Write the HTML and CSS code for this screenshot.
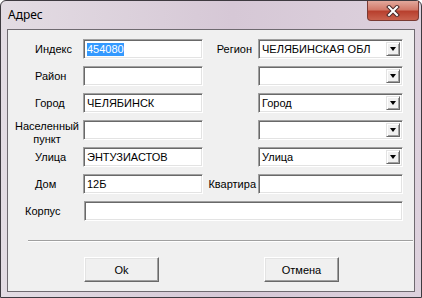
FILE: index.html
```html
<!DOCTYPE html>
<html lang="ru">
<head>
    <meta charset="UTF-8">
    <title>Адрес</title>
    <link rel="stylesheet" href="styles.css">
</head>
<body>
    <div class="window">
        <div class="titlebar">
            <span class="title">Адрес</span>
            <div class="close">
                <svg width="14" height="12" viewBox="0 0 14 12">
                    <path d="M3 2 L11 10 M11 2 L3 10" stroke="#4a2a2a" stroke-width="4" stroke-linecap="square"/>
                    <path d="M3 2 L11 10 M11 2 L3 10" stroke="#fff" stroke-width="2" stroke-linecap="square"/>
                </svg>
            </div>
        </div>
        <div class="client">
            <div class="form">
                <label class="lbl">Индекс</label>
                <div class="edit"><span class="sel">454080</span></div>
                <label class="lbl-r">Регион</label>
                <div class="edit combo"><span class="val">ЧЕЛЯБИНСКАЯ ОБЛ</span><span class="drop"></span></div>

                <label class="lbl">Район</label>
                <div class="edit"></div>
                <span></span>
                <div class="edit combo"><span class="val"></span><span class="drop"></span></div>

                <label class="lbl">Город</label>
                <div class="edit">ЧЕЛЯБИНСК</div>
                <span></span>
                <div class="edit combo"><span class="val">Город</span><span class="drop"></span></div>

                <label class="lbl lbl-two">Населенный<br>пункт</label>
                <div class="edit"></div>
                <span></span>
                <div class="edit combo"><span class="val"></span><span class="drop"></span></div>

                <label class="lbl">Улица</label>
                <div class="edit">ЭНТУЗИАСТОВ</div>
                <span></span>
                <div class="edit combo"><span class="val">Улица</span><span class="drop"></span></div>

                <label class="lbl">Дом</label>
                <div class="edit">12Б</div>
                <label class="lbl-r lbl-tight">Квартира</label>
                <div class="edit"></div>

                <label class="lbl lbl-korpus">Корпус</label>
                <div class="edit wide"></div>
            </div>
            <div class="separator"></div>
            <div class="buttons">
                <button>Ok</button>
                <button>Отмена</button>
            </div>
        </div>
    </div>
</body>
</html>
```

FILE: styles.css
```css
body {
    margin: 0;
    font-family: 'Liberation Sans', Arial, sans-serif;
    font-size: 11px;
    color: #000;
    background: #fff;
}
.window {
    width: 422px;
    height: 298px;
    box-sizing: border-box;
    border: 1px solid #3e3a40;
    border-radius: 6px 6px 0 0;
    background: linear-gradient(to right, #e3dce3, #d6c8d6 55%, #ddd1dd);
    padding: 0 6px 5px 6px;
}
.titlebar {
    height: 28px;
    margin: 0 -6px;
    padding: 0 2px 0 7px;
    display: flex;
    justify-content: space-between;
    align-items: flex-start;
}
.title {
    font-family: 'Noto Sans', sans-serif;
    font-size: 12px;
    line-height: 16px;
    padding-top: 6px;
}
.close {
    width: 50px;
    height: 19px;
    border: 1px solid #7a3a33;
    border-top: none;
    border-radius: 0 0 4px 4px;
    background: linear-gradient(#e2a89c, #d27a6a 45%, #b8402e 55%, #c9624e);
    display: flex;
    justify-content: center;
    align-items: center;
}
.client {
    height: 261px;
    border: 1px solid #6f6a70;
    background: #f0f0f0;
}
.form {
    display: grid;
    grid-template-columns: 75px 120px 55px 145px;
    grid-auto-rows: 20px;
    row-gap: 7px;
    padding-top: 9px;
}
.lbl, .lbl-r {
    display: flex;
    align-items: center;
    white-space: nowrap;
}
.lbl {
    padding-left: 27px;
}
.lbl-r {
    justify-content: flex-end;
    padding-right: 6px;
}
.lbl-tight {
    padding-right: 2px;
}
.lbl-korpus {
    padding-left: 17px;
}
.lbl-two {
    display: block;
    padding: 0;
    width: 78px;
    text-align: center;
    line-height: 13px;
    margin-top: 0;
}
.edit {
    box-sizing: border-box;
    height: 20px;
    background: #fff;
    border-top: 1px solid #a0a0a0;
    border-left: 1px solid #a0a0a0;
    border-right: 1px solid #fff;
    border-bottom: 1px solid #fff;
    box-shadow: inset 1px 1px 0 #696969, inset -1px -1px 0 #e3e3e3;
    padding: 3px 2px 0 3px;
    line-height: 13px;
    white-space: nowrap;
    overflow: hidden;
}
.wide {
    grid-column: 2 / 5;
    margin-left: 1px;
}
.sel {
    background: #3399ff;
    color: #fff;
    display: inline-block;
}
.combo {
    display: flex;
    padding: 1px 2px 1px 1px;
}
.combo .val {
    flex: 1;
    padding: 2px 0 0 2px;
}
.drop {
    width: 14px;
    height: 14px;
    margin-top: 1px;
    box-sizing: border-box;
    background: #f0f0f0;
    border-top: 1px solid #e3e3e3;
    border-left: 1px solid #e3e3e3;
    border-right: 1px solid #696969;
    border-bottom: 1px solid #696969;
    box-shadow: inset 1px 1px 0 #fff, inset -1px -1px 0 #a0a0a0;
    display: flex;
    justify-content: center;
    align-items: center;
}
.drop::after {
    content: "";
    border-left: 3px solid transparent;
    border-right: 3px solid transparent;
    border-top: 4px solid #000;
}
.separator {
    margin: 19px 1px 0 20px;
    border-top: 1px solid #a0a0a0;
    border-bottom: 1px solid #fff;
}
.buttons {
    display: flex;
    gap: 105px;
    padding: 15px 0 0 76px;
}
button {
    width: 75px;
    height: 25px;
    font-family: 'Liberation Sans', Arial, sans-serif;
    font-size: 11px;
    color: #000;
    background: #f0f0f0;
    border-top: 1px solid #fff;
    border-left: 1px solid #fff;
    border-right: 1px solid #696969;
    border-bottom: 1px solid #696969;
    box-shadow: inset -1px -1px 0 #a0a0a0, inset 1px 1px 0 #e3e3e3;
    padding: 0;
}
```
